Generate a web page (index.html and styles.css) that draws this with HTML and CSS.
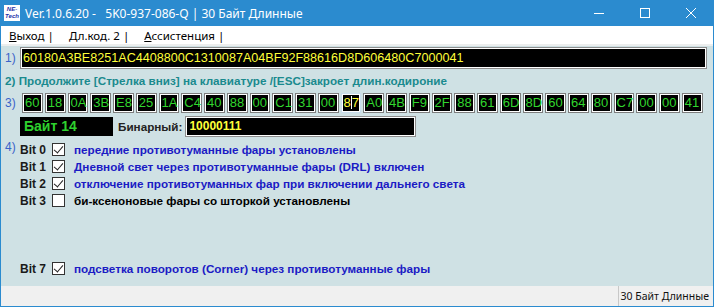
FILE: index.html
```html
<!DOCTYPE html>
<html lang="ru">
<head>
  <meta charset="UTF-8">
  <title>Ver.1.0.6.20 - 5K0-937-086-Q | 30 Байт Длинные</title>
  <link rel="stylesheet" href="styles.css">
</head>
<body>
  <div class="window">
    <div class="titlebar">
      <div class="app-icon"><span class="ne">NE-</span><span class="tech">Tech</span></div>
      <div class="title">Ver.1.0.6.20 - &nbsp;&nbsp;5K0-937-086-Q | 30 Байт Длинные</div>
      <div class="controls">
        <div class="ctl"><svg width="10" height="10" viewBox="0 0 10 10"><path d="M0 5.5h10" stroke="#fff" stroke-width="1"/></svg></div>
        <div class="ctl"><svg width="10" height="10" viewBox="0 0 10 10"><rect x="0.5" y="0.5" width="9" height="9" fill="none" stroke="#fff" stroke-width="1"/></svg></div>
        <div class="ctl"><svg width="10" height="10" viewBox="0 0 10 10"><path d="M0 0L10 10M10 0L0 10" stroke="#fff" stroke-width="1"/></svg></div>
      </div>
    </div>
    <div class="menubar">
      <span class="menu-item"><u>В</u>ыход |</span>
      <span class="menu-item"><u>Д</u>л.код. 2 |</span>
      <span class="menu-item"><u>А</u>ссистенция |</span>
    </div>
    <div class="content">
      <div class="row row-hex">
        <span class="num">1)</span>
        <div class="field hex">60180A3BE8251AC4408800C1310087A04BF92F88616D8D606480C7000041</div>
      </div>
      <div class="row row-hint">2) Продолжите [Стрелка вниз] на клавиатуре /[ESC]закроет длин.кодироние</div>
      <div class="row row-bytes">
        <span class="num">3)</span>
        <div class="bytes" id="bytes"></div>
      </div>
      <div class="row row-byte">
        <div class="byte-name">Байт 14</div>
        <span class="bin-label">Бинарный:</span>
        <div class="field bin">10000111</div>
      </div>
      <div class="row row-bits">
        <span class="num num-sup">4)</span>
        <div class="bits">
          <div class="bit on"><span class="bit-no">Bit 0</span><span class="check"></span><span class="bit-text">передние противотуманные фары установлены</span></div>
          <div class="bit on"><span class="bit-no">Bit 1</span><span class="check"></span><span class="bit-text">Дневной свет через противотуманные фары (DRL) включен</span></div>
          <div class="bit on"><span class="bit-no">Bit 2</span><span class="check"></span><span class="bit-text">отключение противотуманных фар при включении дальнего света</span></div>
          <div class="bit"><span class="bit-no">Bit 3</span><span class="check"></span><span class="bit-text">би-ксеноновые фары со шторкой установлены</span></div>
          <div class="bit empty"></div>
          <div class="bit empty"></div>
          <div class="bit empty"></div>
          <div class="bit on"><span class="bit-no">Bit 7</span><span class="check"></span><span class="bit-text">подсветка поворотов (Corner) через противотуманные фары</span></div>
        </div>
      </div>
    </div>
    <div class="statusbar">
      <span class="status-cell">30 Байт Длинные</span>
    </div>
  </div>
  <script>
    var hex = '60180A3BE8251AC4408800C1310087A04BF92F88616D8D606480C7000041';
    var box = document.getElementById('bytes');
    for (var i = 0; i < hex.length; i += 2) {
      var cell = document.createElement('span');
      cell.className = 'cell';
      if (i / 2 === 14) {
        cell.className = 'cell current';
        cell.innerHTML = '8<i class="caret"></i>7';
      } else {
        cell.textContent = hex.substr(i, 2);
      }
      box.appendChild(cell);
    }
  </script>
</body>
</html>
```

FILE: styles.css
```css
* {
  margin: 0;
  padding: 0;
  box-sizing: border-box;
}
body {
  width: 714px;
  height: 307px;
  overflow: hidden;
  background: #fff;
}
.window {
  width: 714px;
  height: 307px;
  display: flex;
  flex-direction: column;
  border: 1px solid #2b8bcf;
  border-top: 0;
}
.titlebar {
  height: 26px;
  flex: none;
  background: #2b8bcf;
  display: flex;
  align-items: center;
  color: #fff;
  font-family: "Noto Sans", sans-serif;
  font-size: 12px;
  margin: 0 -1px;
}
.app-icon {
  width: 16px;
  height: 16px;
  margin-left: 4px;
  background: #fff;
  display: flex;
  flex-direction: column;
  align-items: center;
  font-family: "Liberation Sans", sans-serif;
  font-weight: bold;
  font-style: italic;
  color: #1e2fa8;
  line-height: 7px;
  padding-top: 1px;
}
.app-icon .ne {
  font-size: 6px;
}
.app-icon .tech {
  font-size: 6px;
}
.title {
  margin-left: 5px;
  flex: 1;
  white-space: nowrap;
}
.controls {
  display: flex;
  height: 26px;
}
.ctl {
  width: 46px;
  display: flex;
  align-items: center;
  justify-content: center;
}
.menubar {
  flex: none;
  height: 20px;
  background: #fff;
  display: flex;
  align-items: center;
  font-family: "Noto Sans", sans-serif;
  font-size: 11.5px;
  color: #000;
  padding-left: 8px;
  border-bottom: 2px solid #eceeee;
}
.menu-item {
  margin-right: 15px;
  white-space: nowrap;
}
.content {
  flex: 1;
  background: #cfe1e4;
  padding: 2px 0 0 4px;
  font-family: "Liberation Sans", Arial, sans-serif;
  font-size: 11.7px;
  font-weight: bold;
}
.row {
  display: flex;
  align-items: center;
}
.num {
  width: 15px;
  color: #3a63c9;
  font-weight: normal;
  font-size: 12px;
}
.field {
  background: #000;
  border: 1px solid #fff;
  box-shadow: 0 0 0 1px #8c8c8c;
}
.hex {
  margin-left: 1px;
  width: 685px;
  height: 20px;
  color: #ffff3a;
  font-size: 12.6px;
  font-weight: normal;
  line-height: 18px;
  padding-left: 1px;
  white-space: nowrap;
}
.row-hint {
  margin-top: 4px;
  height: 17px;
  color: #1a8a8e;
  white-space: nowrap;
}
.row-bytes {
  margin-top: 4px;
}
.bytes {
  display: flex;
  gap: 2px;
  margin-left: 2px;
}
.cell {
  width: 20.75px;
  height: 20px;
  background: #000;
  border: 1px solid #7d7d7d;
  box-shadow: inset 0 0 0 1px #fff;
  color: #31d62e;
  font-size: 13px;
  font-weight: normal;
  line-height: 18px;
  padding-left: 2px;
  white-space: nowrap;
}
.cell.current {
  color: #ffff3a;
  border-color: #c8dcec;
}
.caret {
  display: inline-block;
  width: 1px;
  height: 13px;
  background: #fff;
  vertical-align: -2px;
}
.row-byte {
  margin-top: 4px;
  margin-left: 15px;
}
.byte-name {
  width: 93px;
  height: 19px;
  background: #000;
  color: #2ed12e;
  font-size: 14px;
  line-height: 19px;
  padding-left: 4px;
}
.bin-label {
  margin-left: 5px;
  color: #222;
}
.bin {
  margin-left: 4px;
  width: 229px;
  height: 19px;
  color: #ffff3a;
  font-size: 12px;
  line-height: 17px;
  padding-left: 2px;
}
.row-bits {
  margin-top: 5px;
  align-items: flex-start;
}
.num-sup {
  margin-top: -1px;
}
.bits {
  display: flex;
  flex-direction: column;
}
.bit {
  height: 17px;
  display: flex;
  align-items: center;
  white-space: nowrap;
}
.bit-no {
  width: 32px;
  color: #1a1a1a;
  font-size: 12px;
}
.check {
  width: 13px;
  height: 13px;
  background: #fff;
  border: 1px solid #333;
  position: relative;
}
.bit.on .check::after {
  content: "";
  position: absolute;
  left: 3px;
  top: 0px;
  width: 4px;
  height: 8px;
  border: solid #222;
  border-width: 0 1px 1px 0;
  transform: rotate(40deg);
}
.bit-text {
  margin-left: 9px;
  color: #000;
}
.bit.on .bit-text {
  color: #1b1bc4;
}
.statusbar {
  flex: none;
  height: 20px;
  background: #f0f0f0;
  display: flex;
  justify-content: flex-end;
  font-family: "Noto Sans", sans-serif;
  font-size: 10.5px;
  color: #111;
}
.status-cell {
  border-left: 1px solid #c8c8c8;
  padding: 0 4px 0 2px;
  line-height: 20px;
  white-space: nowrap;
}
```
